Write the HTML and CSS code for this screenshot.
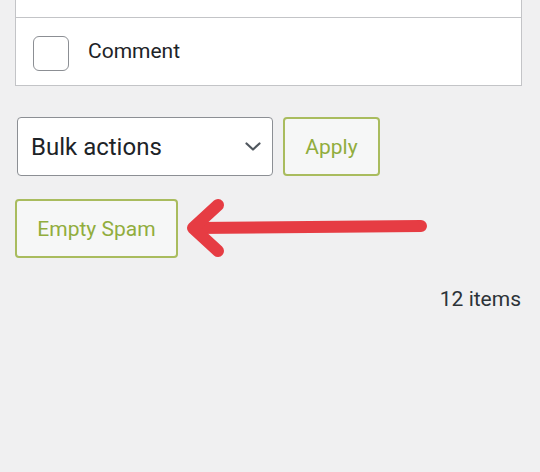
FILE: index.html
```html
<!DOCTYPE html>
<html lang="en">
<head>
<meta charset="utf-8">
<title>Spam comments</title>
<link rel="stylesheet" href="styles.css">
</head>
<body>
<div class="page">
  <div class="table">
    <div class="row-top"></div>
    <div class="row">
      <span class="checkbox"></span>
      <span class="label">Comment</span>
    </div>
  </div>

  <div class="controls">
    <div class="select">
      <span class="select-text">Bulk actions</span>
      <svg class="chevron" width="16" height="9" viewBox="0 0 16 9"><path d="M1.5 1.5 L8 7.5 L14.5 1.5" fill="none" stroke="#50575e" stroke-width="2.2" stroke-linecap="round" stroke-linejoin="round"/></svg>
    </div>
    <button class="btn btn-apply">Apply</button>
  </div>

  <div class="controls second">
    <button class="btn btn-empty">Empty Spam</button>
  </div>

  <div class="count">12 items</div>

  <svg class="arrow" width="540" height="472" viewBox="0 0 540 472">
    <g fill="none" stroke="#e63c43" stroke-width="12" stroke-linecap="round" stroke-linejoin="round">
      <path d="M196 228 L421 226"/>
      <path d="M218 205 L193 228 L218 251"/>
    </g>
  </svg>
</div>
</body>
</html>
```

FILE: styles.css
```css
html, body {
  margin: 0;
  padding: 0;
  background: #f0f0f1;
}
body {
  font-family: Roboto, "Liberation Sans", sans-serif;
  color: #1d2327;
  width: 540px;
  height: 472px;
  overflow: hidden;
}
.page {
  padding-left: 15px;
  width: 507px;
}
.table {
  background: #fff;
  border: 1px solid #c3c4c7;
  border-top: none;
}
.row-top {
  height: 17px;
  border-bottom: 1px solid #c3c4c7;
}
.row {
  height: 67px;
  display: flex;
  align-items: flex-start;
  padding-left: 17px;
  box-sizing: border-box;
}
.checkbox {
  width: 34px;
  height: 33px;
  margin-top: 18px;
  border: 1.5px solid #8c8f94;
  border-radius: 6px;
  background: #fff;
  flex: none;
}
.label {
  margin-left: 19px;
  margin-top: 21px;
  font-size: 21px;
  line-height: 25px;
  color: #1d2327;
}
.controls {
  display: flex;
  align-items: center;
  gap: 10px;
  margin-top: 31px;
}
.controls.second {
  margin-top: 23px;
}
.select {
  margin-left: 2px;
  width: 256px;
  height: 59px;
  box-sizing: border-box;
  border: 1.5px solid #8c8f94;
  border-radius: 4px;
  background: #fff;
  display: flex;
  align-items: center;
  justify-content: space-between;
  padding-left: 13px;
  padding-right: 11px;
}
.select-text {
  font-size: 24px;
  color: #1d2327;
}
.chevron {
  display: block;
}
.btn {
  height: 59px;
  box-sizing: border-box;
  border: 2px solid #a9bc5e;
  border-radius: 4px;
  background: #f6f7f7;
  color: #91ad3d;
  font-family: Roboto, "Liberation Sans", sans-serif;
  font-size: 21px;
  padding: 0;
  display: flex;
  align-items: center;
  justify-content: center;
}
.btn-apply {
  width: 97px;
}
.btn-empty {
  width: 163px;
}
.count {
  margin-top: 29px;
  text-align: right;
  padding-right: 1px;
  font-size: 21px;
  line-height: 25px;
  color: #2c3338;
}
.arrow {
  position: absolute;
  left: 0;
  top: 0;
  pointer-events: none;
}
```
